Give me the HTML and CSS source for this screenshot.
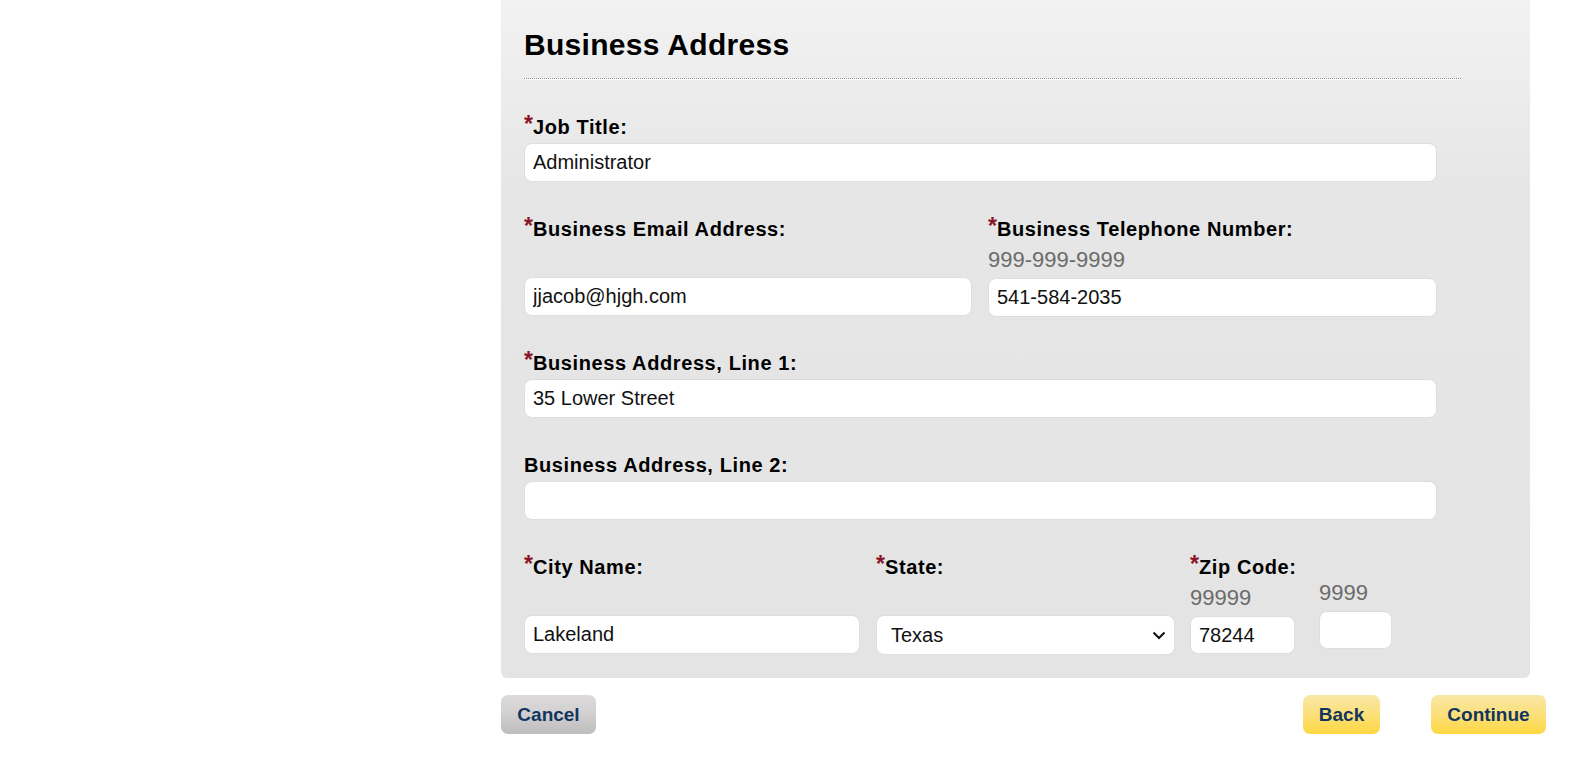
FILE: index.html
```html
<!DOCTYPE html>
<html lang="en">
<head>
<meta charset="utf-8">
<title>Business Address</title>
<link rel="stylesheet" href="styles.css">
</head>
<body>
<div class="page">
  <form class="panel">
    <h2 class="title">Business Address</h2>
    <div class="rule"></div>

    <div class="row first">
      <div class="field full">
        <label class="lbl"><span class="req">*</span>Job Title:</label>
        <input class="inp" type="text" value="Administrator">
      </div>
    </div>

    <div class="row gap">
      <div class="field half">
        <label class="lbl"><span class="req">*</span>Business Email Address:</label>
        <input class="inp email" type="text" value="jjacob@hjgh.com">
      </div>
      <div class="field half">
        <label class="lbl"><span class="req">*</span>Business Telephone Number:</label>
        <div class="hint">999-999-9999</div>
        <input class="inp" type="text" value="541-584-2035">
      </div>
    </div>

    <div class="row addr1">
      <div class="field full">
        <label class="lbl"><span class="req">*</span>Business Address, Line 1:</label>
        <input class="inp" type="text" value="35 Lower Street">
      </div>
    </div>

    <div class="row addr2">
      <div class="field full">
        <label class="lbl">Business Address, Line 2:</label>
        <input class="inp" type="text" value="">
      </div>
    </div>

    <div class="row gap">
      <div class="field city">
        <label class="lbl"><span class="req">*</span>City Name:</label>
        <input class="inp" type="text" value="Lakeland">
      </div>
      <div class="field state">
        <label class="lbl"><span class="req">*</span>State:</label>
        <div class="selwrap">
          <select class="inp sel"><option>Texas</option></select>
          <svg class="chev" width="14" height="9" viewBox="0 0 14 9"><path d="M1.5 1.5 L7 7 L12.5 1.5" fill="none" stroke="#111" stroke-width="2"/></svg>
        </div>
      </div>
      <div class="field zip">
        <label class="lbl"><span class="req">*</span>Zip Code:</label>
        <div class="zipparts">
          <div class="zp zp1">
            <div class="hint">99999</div>
            <input class="inp" type="text" value="78244">
          </div>
          <div class="zp zp2">
            <div class="hint">9999</div>
            <input class="inp" type="text" value="">
          </div>
        </div>
      </div>
    </div>
  </form>

  <div class="actions">
    <button class="btn grey" type="button">Cancel</button>
    <div class="right">
      <button class="btn gold back" type="button">Back</button>
      <button class="btn gold cont" type="button">Continue</button>
    </div>
  </div>
</div>
</body>
</html>
```

FILE: styles.css
```css
html, body {
  margin: 0;
  padding: 0;
  background: #fff;
}
body {
  font-family: "Liberation Sans", Arial, sans-serif;
  color: #000;
}
.page {
  margin-left: 501px;
  width: 1045px;
}
.panel {
  width: 1029px;
  box-sizing: border-box;
  padding: 28px 0 23px 23px;
  background: linear-gradient(#f2f2f2 0, #e6e6e6 190px, #e4e4e4 100%);
  border-radius: 0 0 6px 6px;
}
.title {
  margin: 0;
  font-size: 30px;
  line-height: 34px;
  font-weight: bold;
  letter-spacing: 0.3px;
  padding-bottom: 16px;
}
.rule {
  width: 937px;
  height: 0;
  border-top: 1px dotted #8c8c8c;
  background: #fff;
  box-shadow: 0 1px 0 #fafafa;
}
.row {
  display: flex;
  align-items: stretch;
  width: 913px;
  margin-top: 35px;
}
.row.first { margin-top: 36px; }
.row.addr1 { margin-top: 34px; }
.row.addr2 { margin-top: 36px; }
.gap { column-gap: 16px; }
.field {
  display: flex;
  flex-direction: column;
}
.field > .inp,
.field > .selwrap,
.field > .zipparts { margin-top: auto; }
.full { width: 913px; }
.half { width: 448px; }
.half + .half { width: 449px; }
.lbl {
  display: block;
  font-size: 20px;
  line-height: 22px;
  font-weight: bold;
  letter-spacing: 0.6px;
  margin-bottom: 5px;
  white-space: nowrap;
}
.req {
  color: #8b1526;
  font-size: 23px;
  letter-spacing: 0;
  position: relative;
  top: -2px;
}
.hint {
  font-size: 22px;
  line-height: 25px;
  color: #6b6b6b;
  margin-top: 2px;
  margin-bottom: 6px;
}
.inp {
  box-sizing: border-box;
  height: 39px;
  width: 100%;
  border: 1px solid #dedede;
  border-radius: 8px;
  background: #fff;
  font-family: "Liberation Sans", Arial, sans-serif;
  font-size: 20px;
  color: #111;
  padding: 0 8px;
  margin: 0;
  outline: none;
}
.inp.email { margin-bottom: 1px; }
.city { width: 336px; }
.state { width: 299px; }
.city .inp { margin-bottom: 1px; }
.selwrap {
  position: relative;
}
.sel {
  -webkit-appearance: none;
  appearance: none;
  height: 40px;
  padding-left: 14px;
}
.chev {
  position: absolute;
  right: 9px;
  top: 16px;
  pointer-events: none;
}
.zip {
  margin-left: -1px;
  width: 202px;
}
.zipparts {
  display: flex;
  align-items: flex-start;
  column-gap: 24px;
}
.zp1 { width: 105px; }
.zp1 .inp { margin-bottom: 1px; height: 38px; }
.zp2 { width: 73px; margin-top: -5px; }
.zp2 .inp { height: 38px; }

.actions {
  display: flex;
  justify-content: space-between;
  align-items: center;
  margin-top: 17px;
}
.right {
  display: flex;
  column-gap: 51px;
}
.btn {
  height: 39px;
  border: none;
  border-radius: 7px;
  font-family: "Liberation Sans", Arial, sans-serif;
  font-size: 19px;
  font-weight: bold;
  color: #12355f;
  padding: 0 15px;
  cursor: pointer;
}
.grey {
  width: 95px;
  background: linear-gradient(#dcdadb 0%, #d2d0d1 45%, #bebcbd 100%);
}
.gold {
  background: linear-gradient(#f9e7a6 0%, #fbe07a 50%, #fdd741 100%);
}
.back { width: 77px; }
.cont { width: 115px; }
```
